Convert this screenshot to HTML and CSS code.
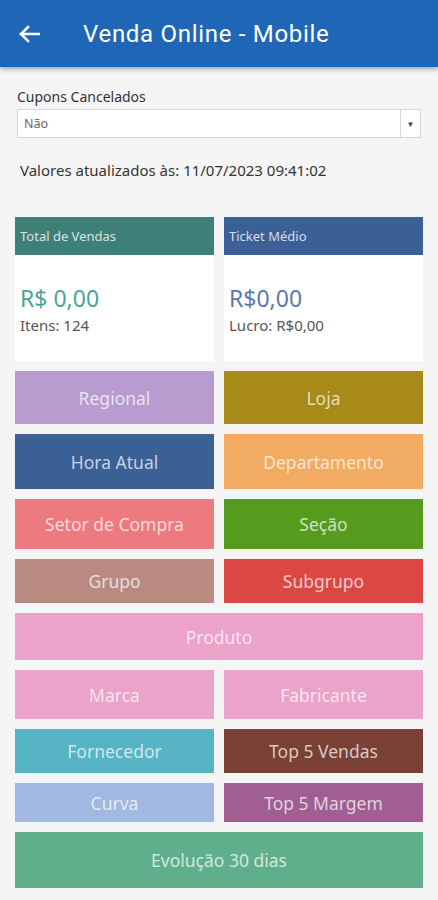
FILE: index.html
```html
<!DOCTYPE html>
<html lang="pt">
<head>
    <meta charset="UTF-8">
    <meta name="viewport" content="width=device-width, initial-scale=1.0">
    <title>Venda Online - Mobile</title>
    <link rel="stylesheet" href="styles.css">
</head>
<body>

    <header class="topbar">
        <button class="back-button" aria-label="Voltar">
            <svg width="22" height="18" viewBox="0 0 22 18">
                <path d="M21 9H3M10 2L3 9l7 7" fill="none" stroke="#fff" stroke-width="2.6" stroke-linecap="square"/>
            </svg>
        </button>
        <h1>Venda Online - Mobile</h1>
    </header>

    <main class="content">
        <!-- Filtro -->
        <div class="filter">
            <label class="filter-label">Cupons Cancelados</label>
            <div class="select">
                <span class="select-value">Não</span>
                <span class="select-arrow">&#9660;</span>
            </div>
        </div>

        <p class="updated">Valores atualizados às: 11/07/2023 09:41:02</p>

        <!-- Indicadores -->
        <div class="cards">
            <div class="card">
                <div class="card-head teal">Total de Vendas</div>
                <div class="card-body">
                    <div class="card-value teal-text">R$ 0,00</div>
                    <div class="card-sub">Itens: 124</div>
                </div>
            </div>
            <div class="card">
                <div class="card-head blue">Ticket Médio</div>
                <div class="card-body">
                    <div class="card-value blue-text">R$0,00</div>
                    <div class="card-sub">Lucro: R$0,00</div>
                </div>
            </div>
        </div>

        <!-- Menu -->
        <div class="menu">
            <a class="tile h53 regional">Regional</a>
            <a class="tile h53 loja">Loja</a>
            <a class="tile h55 hora">Hora Atual</a>
            <a class="tile h55 departamento">Departamento</a>
            <a class="tile h50 setor">Setor de Compra</a>
            <a class="tile h50 secao">Seção</a>
            <a class="tile h44 grupo">Grupo</a>
            <a class="tile h44 subgrupo">Subgrupo</a>
            <a class="tile h47 wide produto">Produto</a>
            <a class="tile h49 marca">Marca</a>
            <a class="tile h49 marca">Fabricante</a>
            <a class="tile h44 fornecedor">Fornecedor</a>
            <a class="tile h44 top-vendas">Top 5 Vendas</a>
            <a class="tile h39 curva">Curva</a>
            <a class="tile h39 top-margem">Top 5 Margem</a>
            <a class="tile h56 wide evolucao">Evolução 30 dias</a>
        </div>
    </main>

</body>
</html>
```

FILE: styles.css
```css
body {
    font-family: "Noto Sans", "Open Sans", sans-serif;
    background: #f5f5f5;
    margin: 0;
    padding: 0;
}

/* Barra superior */
.topbar {
    height: 67px;
    background-color: #1f67b6;
    color: white;
    display: flex;
    align-items: center;
    box-shadow: 0 2px 5px rgba(0, 0, 0, 0.35);
}

.back-button {
    background: none;
    border: none;
    padding: 0;
    margin: 0 0 0 18px;
    width: 22px;
    height: 18px;
    display: flex;
    cursor: pointer;
}

.topbar h1 {
    margin: 0 0 0 43px;
    font-family: Roboto, sans-serif;
    font-size: 24px;
    font-weight: 400;
    letter-spacing: 0.7px;
}

.content {
    padding: 0 15px;
}

/* Filtro */
.filter {
    padding: 20px 2px 0;
}

.filter-label {
    display: block;
    font-size: 14px;
    color: #333;
    line-height: 19px;
}

.select {
    margin-top: 3px;
    height: 27px;
    background: #fff;
    border: 1px solid #d6d6d6;
    display: flex;
    align-items: center;
}

.select-value {
    flex: 1;
    padding-left: 6px;
    font-size: 12.5px;
    color: #666;
}

.select-arrow {
    width: 19px;
    height: 27px;
    border-left: 1px solid #d6d6d6;
    display: flex;
    align-items: center;
    justify-content: center;
    font-size: 8px;
    color: #444;
}

.updated {
    margin: 22px 0 0 5px;
    font-size: 15px;
    color: #333;
    line-height: 20px;
}

/* Indicadores */
.cards {
    margin-top: 37px;
    display: grid;
    grid-template-columns: 1fr 1fr;
    gap: 10px;
}

.card {
    background: #fff;
    height: 144px;
}

.card-head {
    height: 38px;
    display: flex;
    align-items: center;
    padding-left: 5px;
    font-size: 13px;
    color: rgba(255, 255, 255, 0.8);
}

.teal { background: #3e8077; }
.blue { background: #3b6096; }

.card-body {
    padding: 28px 0 0 5px;
}

.card-value {
    font-size: 23px;
    line-height: 30px;
}

.teal-text { color: #4aa596; }
.blue-text { color: #5b78ab; }

.card-sub {
    font-size: 15px;
    color: #555;
    margin-top: 2px;
}

/* Menu de botões */
.menu {
    margin-top: 10px;
    display: grid;
    grid-template-columns: 1fr 1fr;
    gap: 10px;
    padding-bottom: 14px;
}

.tile {
    display: flex;
    align-items: center;
    justify-content: center;
    font-size: 17.5px;
    color: rgba(255, 255, 255, 0.72);
    text-decoration: none;
    cursor: pointer;
}

.wide { grid-column: span 2; }

.h39 { height: 39px; }
.h44 { height: 44px; }
.h47 { height: 47px; }
.h49 { height: 49px; }
.h50 { height: 50px; }
.h53 { height: 53px; }
.h55 { height: 55px; }
.h56 { height: 56px; }

.regional { background: #b89ccf; }
.loja { background: #a88a18; }
.hora { background: #3b6096; }
.departamento { background: #f2ab62; }
.setor { background: #ec7a7f; }
.secao { background: #559b1e; }
.grupo { background: #b88a82; }
.subgrupo { background: #dc4744; }
.produto { background: #eba3ca; }
.marca { background: #eba3ca; }
.fornecedor { background: #57b4c4; }
.top-vendas { background: #7a3f35; }
.curva { background: #a1b8e3; }
.top-margem { background: #a05e92; }
.evolucao { background: #5faf8c; }
```
